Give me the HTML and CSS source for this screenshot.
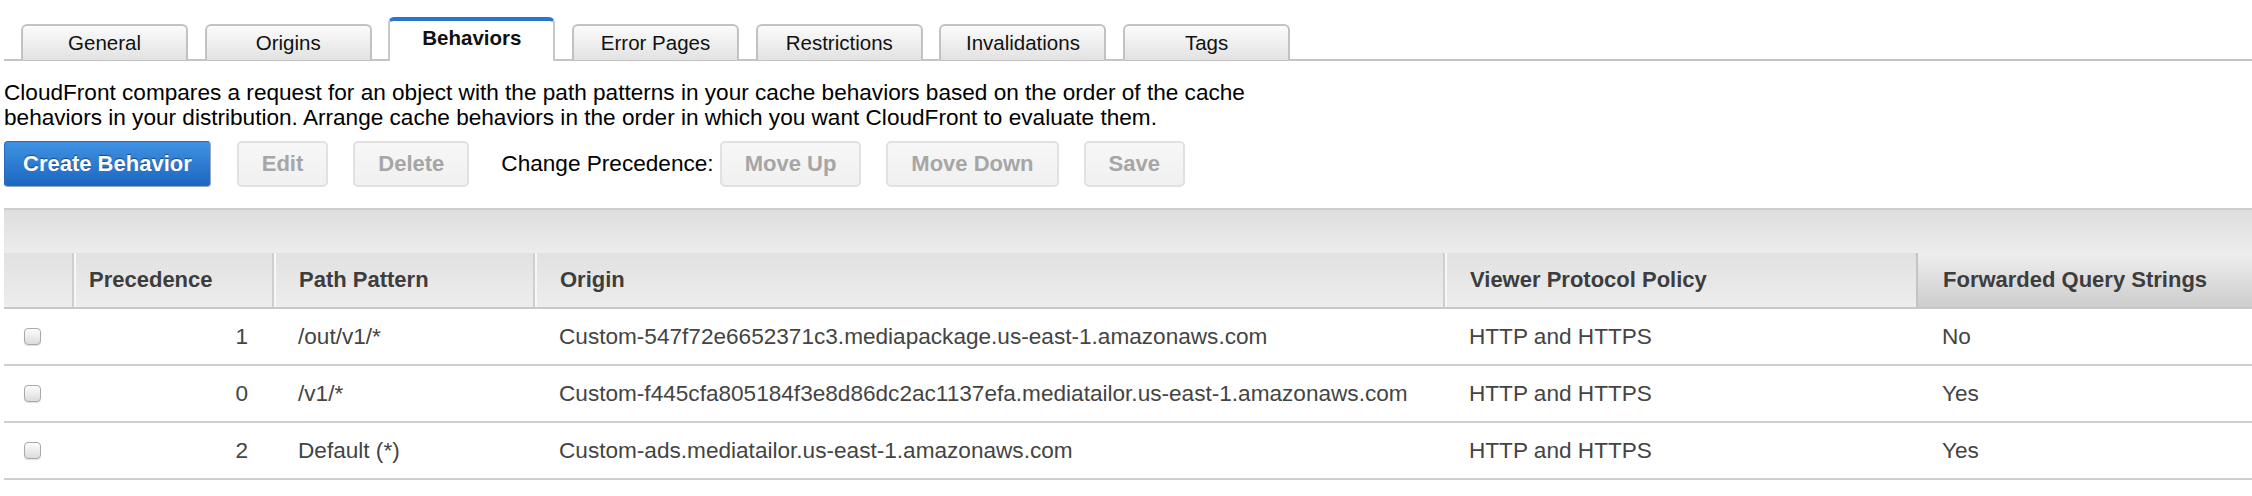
FILE: index.html
```html
<!DOCTYPE html>
<html lang="en">
<head>
<meta charset="utf-8">
<title>CloudFront Behaviors</title>
<link rel="stylesheet" href="styles.css">
</head>
<body>
<div class="page">
  <ul class="tabs">
    <li class="tab">General</li>
    <li class="tab">Origins</li>
    <li class="tab active">Behaviors</li>
    <li class="tab">Error Pages</li>
    <li class="tab">Restrictions</li>
    <li class="tab">Invalidations</li>
    <li class="tab">Tags</li>
  </ul>

  <p class="intro">CloudFront compares a request for an object with the path patterns in your cache behaviors based on the order of the cache behaviors in your distribution. Arrange cache behaviors in the order in which you want CloudFront to evaluate them.</p>

  <div class="toolbar">
    <button class="btn btn-primary">Create Behavior</button>
    <button class="btn btn-disabled">Edit</button>
    <button class="btn btn-disabled btn-last">Delete</button>
    <span class="toolbar-label">Change Precedence:</span>
    <button class="btn btn-disabled">Move Up</button>
    <button class="btn btn-disabled">Move Down</button>
    <button class="btn btn-disabled">Save</button>
  </div>

  <div class="grid">
    <div class="grid-top"></div>
    <table class="grid-table">
      <colgroup>
        <col class="c-check">
        <col class="c-prec">
        <col class="c-path">
        <col class="c-origin">
        <col class="c-viewer">
        <col class="c-fwd">
      </colgroup>
      <thead>
        <tr>
          <th class="th-check"></th>
          <th class="th-prec">Precedence</th>
          <th>Path Pattern</th>
          <th>Origin</th>
          <th>Viewer Protocol Policy</th>
          <th class="sorted">Forwarded Query Strings</th>
        </tr>
      </thead>
      <tbody>
        <tr>
          <td class="td-check"><input type="checkbox" class="cb"></td>
          <td class="td-prec">1</td>
          <td>/out/v1/*</td>
          <td>Custom-547f72e6652371c3.mediapackage.us-east-1.amazonaws.com</td>
          <td>HTTP and HTTPS</td>
          <td>No</td>
        </tr>
        <tr>
          <td class="td-check"><input type="checkbox" class="cb"></td>
          <td class="td-prec">0</td>
          <td>/v1/*</td>
          <td>Custom-f445cfa805184f3e8d86dc2ac1137efa.mediatailor.us-east-1.amazonaws.com</td>
          <td>HTTP and HTTPS</td>
          <td>Yes</td>
        </tr>
        <tr>
          <td class="td-check"><input type="checkbox" class="cb"></td>
          <td class="td-prec">2</td>
          <td>Default (*)</td>
          <td>Custom-ads.mediatailor.us-east-1.amazonaws.com</td>
          <td>HTTP and HTTPS</td>
          <td>Yes</td>
        </tr>
      </tbody>
    </table>
  </div>
</div>
</body>
</html>
```

FILE: styles.css
```css
html, body {
  margin: 0;
  padding: 0;
  background: #ffffff;
}

body {
  font-family: "Liberation Sans", Arial, Helvetica, sans-serif;
  color: #000;
}

.page {
  padding-left: 4px;
}

/* Tabs */
.tabs {
  list-style: none;
  margin: 0;
  padding: 0 0 0 17px;
  height: 59px;
  display: flex;
  align-items: flex-end;
  gap: 16.7px;
  border-bottom: 2px solid #c4c4c4;
  box-sizing: content-box;
}

.tab {
  box-sizing: border-box;
  width: 167px;
  height: 36px;
  margin-bottom: -1px;
  display: flex;
  align-items: center;
  justify-content: center;
  font-size: 20.5px;
  color: #111;
  border: 2px solid #c2c2c2;
  border-bottom: none;
  border-radius: 6px 6px 0 0;
  background: linear-gradient(#fbfbfb, #e2e2e2);
}

.tab.active {
  height: 44px;
  margin-bottom: -2px;
  padding-bottom: 6px;
  font-weight: bold;
  background: #ffffff;
  border-top: 4px solid #2b74cf;
  border-left-color: #c8c8c8;
  border-right-color: #c8c8c8;
}

/* Intro */
.intro {
  margin: 19px 0 0 0;
  max-width: 1295px;
  font-size: 22.6px;
  line-height: 25px;
  color: #000;
}

/* Toolbar */
.toolbar {
  margin-top: 11px;
  display: flex;
  align-items: center;
  height: 46px;
}

.btn {
  box-sizing: border-box;
  height: 46px;
  font-family: "Liberation Sans", Arial, Helvetica, sans-serif;
  font-size: 22px;
  font-weight: bold;
  padding: 0 23px;
  margin-right: 26px;
  border-radius: 5px;
  cursor: default;
}

.btn-primary {
  padding: 0 18px;
  color: #fff;
  border: 1px solid #2a6bb8;
  border-bottom-color: #9aa9bb;
  border-right-color: #9aa9bb;
  background: linear-gradient(#3f92e2, #1c66c1);
  text-shadow: 0 -1px 1px rgba(0, 0, 0, 0.45);
  border-radius: 4px;
}

.btn-disabled {
  color: #a6a6a6;
  border: 2px solid #e1e1e1;
  background: linear-gradient(#f7f7f7, #f0f0f0);
  margin-right: 25px;
}

.btn-disabled.btn-last {
  margin-right: 32px;
}

.toolbar-label {
  font-size: 22.6px;
  color: #000;
  margin-right: 6px;
}

/* Grid */
.grid {
  margin-top: 21px;
}

.grid-top {
  height: 43px;
  border-top: 2px solid #cdcdcd;
  background: linear-gradient(#dedede, #ececec);
}

.grid-table {
  width: 2248px;
  table-layout: fixed;
  border-collapse: collapse;
  border-spacing: 0;
}

.c-check { width: 69px; }
.c-prec { width: 200px; }
.c-path { width: 261px; }
.c-origin { width: 910px; }
.c-viewer { width: 473px; }
.c-fwd { width: 335px; }

.grid-table th {
  height: 54px;
  padding: 0 0 0 25px;
  text-align: left;
  font-size: 22px;
  font-weight: bold;
  color: #3d3d3d;
  background: linear-gradient(#e1e1e1, #ededed);
  border-left: 2px solid #cfcfcf;
  box-shadow: inset 2px 0 0 #f7f7f7;
  border-bottom: 2px solid #c8c8c8;
  white-space: nowrap;
}

.grid-table th.th-check {
  border-left: none;
  box-shadow: none;
}

.grid-table th.th-prec {
  padding-left: 15px;
}

.grid-table th.sorted {
  background: linear-gradient(#eeeeee, #cdcdcd);
  border-left: 2px solid #c4c4c4;
  box-shadow: none;
}

.grid-table td {
  height: 55px;
  padding: 0 0 0 25px;
  font-size: 22.6px;
  color: #444;
  border-bottom: 2px solid #cfcfcf;
  white-space: nowrap;
  vertical-align: middle;
}

.grid-table td.td-check {
  padding-left: 20px;
}

.grid-table td.td-prec {
  padding: 0 25px 0 0;
  text-align: right;
}

.cb {
  appearance: none;
  -webkit-appearance: none;
  display: block;
  margin: 0;
  width: 17px;
  height: 17px;
  box-sizing: border-box;
  border: 1px solid #a9a9a9;
  border-radius: 4px;
  background: linear-gradient(#fdfdfd, #dcdcdc);
  box-shadow: 0 1px 1px rgba(0, 0, 0, 0.12);
}
```
